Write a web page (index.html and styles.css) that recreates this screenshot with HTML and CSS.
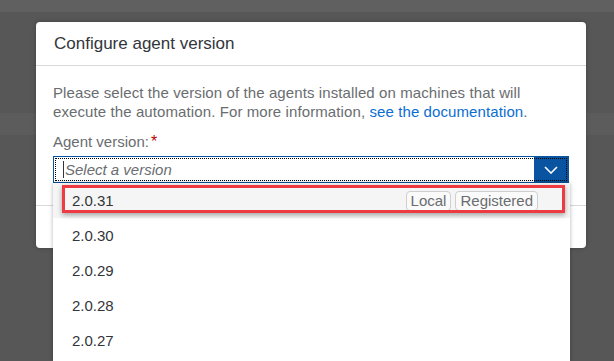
FILE: index.html
```html
<!doctype html>
<html lang="en">
  <head>
    <meta charset="UTF-8" />
    <title>Configure agent version</title>
    <link rel="stylesheet" href="styles.css">
  </head>
  <body>
    <div class="backdrop">
      <div class="top-bar"></div>
      <div class="page-band"></div>
    </div>

    <div class="dialog">
      <div class="dialog-header">Configure agent version</div>
      <div class="dialog-body">
        <p class="info">
          Please select the version of the agents installed on machines that will
          execute the automation. For more information, <a href="#" class="link">see the documentation</a>.
        </p>
        <label class="field-label" for="version">Agent version:<span class="required">*</span></label>
        <div class="select-field">
          <div class="select-input" id="version"><span class="caret"></span><span class="placeholder">Select a version</span></div>
          <div class="select-arrow">
            <svg width="14" height="8" viewBox="0 0 14 8">
              <path d="M1 1 L7 7 L13 1" fill="none" stroke="#fff" stroke-width="1.6" />
            </svg>
          </div>
        </div>
      </div>
      <div class="dialog-footer"></div>
    </div>

    <div class="dropdown">
      <div class="option option-hover">
        <span>2.0.31</span>
        <span class="badges">
          <span class="badge">Local</span>
          <span class="badge">Registered</span>
        </span>
      </div>
      <div class="option">2.0.30</div>
      <div class="option">2.0.29</div>
      <div class="option">2.0.28</div>
      <div class="option">2.0.27</div>
      <div class="highlight-box"></div>
    </div>
  </body>
</html>
```

FILE: styles.css
```css
body {
  margin: 0;
  height: 361px;
  overflow: hidden;
  font-family: "Liberation Sans", Arial, sans-serif;
  background: #575757;
  position: relative;
}

.backdrop {
  display: flex;
  flex-direction: column;
}

.top-bar {
  height: 12px;
  background: #606060;
}

.page-band {
  height: 22px;
  margin-top: 101px;
  background: #5c5c5c;
}

.dialog {
  position: absolute;
  left: 36px;
  top: 22px;
  width: 550px;
  height: 226px;
  background: #fff;
  border-radius: 4px;
  box-shadow: 0 0 4px rgba(0, 0, 0, 0.25);
  display: flex;
  flex-direction: column;
}

.dialog-header {
  height: 43px;
  line-height: 43px;
  padding-left: 18px;
  font-size: 17px;
  color: #32363a;
  border-bottom: 1px solid #d9d9d9;
}

.dialog-body {
  padding: 17px 17px 0 17px;
  height: 122px;
  border-bottom: 1px solid #d9d9d9;
}

.info {
  margin: 0 0 11px 0;
  font-size: 15px;
  letter-spacing: 0.1px;
  line-height: 19px;
  color: #6a6d70;
}

.link {
  color: #0a6ed1;
  text-decoration: none;
}

.field-label {
  display: block;
  font-size: 15px;
  line-height: 19px;
  color: #6a6d70;
  margin-bottom: 5px;
}

.required {
  color: #bb0000;
  margin-left: 2px;
  font-size: 16px;
}

.select-field {
  position: relative;
  display: flex;
  height: 27px;
  border: 1px solid #0854a0;
  box-sizing: border-box;
}

.select-field::after {
  content: "";
  position: absolute;
  inset: 1px;
  border: 1px dotted #000;
  pointer-events: none;
}

.select-input {
  flex: 1;
  display: flex;
  align-items: center;
  padding-left: 9px;
  font-size: 15px;
}

.caret {
  width: 1px;
  height: 17px;
  background: #32363a;
  margin-right: 1px;
}

.placeholder {
  font-style: italic;
  color: #6a6d70;
}

.select-arrow {
  width: 34px;
  background: #0854a0;
  display: flex;
  align-items: center;
  justify-content: center;
}

.dialog-footer {
  flex: 1;
}

.dropdown {
  position: absolute;
  left: 53px;
  top: 183px;
  width: 517px;
  height: 178px;
  background: #fff;
  box-shadow: 0 0 4px rgba(0, 0, 0, 0.3);
}

.option {
  height: 35px;
  display: flex;
  align-items: center;
  justify-content: space-between;
  padding: 0 32px 0 19px;
  font-size: 15px;
  color: #32363a;
}

.option-hover {
  background: #f5f5f5;
}

.badges {
  display: flex;
  gap: 4px;
}

.badge {
  height: 20px;
  line-height: 18px;
  box-sizing: border-box;
  padding: 0 4px;
  border: 1px solid #cfcfcf;
  border-radius: 4px;
  font-size: 15px;
  color: #6a6d70;
  background: #fafafa;
}

.highlight-box {
  position: absolute;
  left: 9px;
  top: 2px;
  width: 503px;
  height: 28px;
  box-sizing: border-box;
  border: 3px solid #ee3b43;
  box-shadow: 0 2px 5px rgba(0, 0, 0, 0.35);
}
```
